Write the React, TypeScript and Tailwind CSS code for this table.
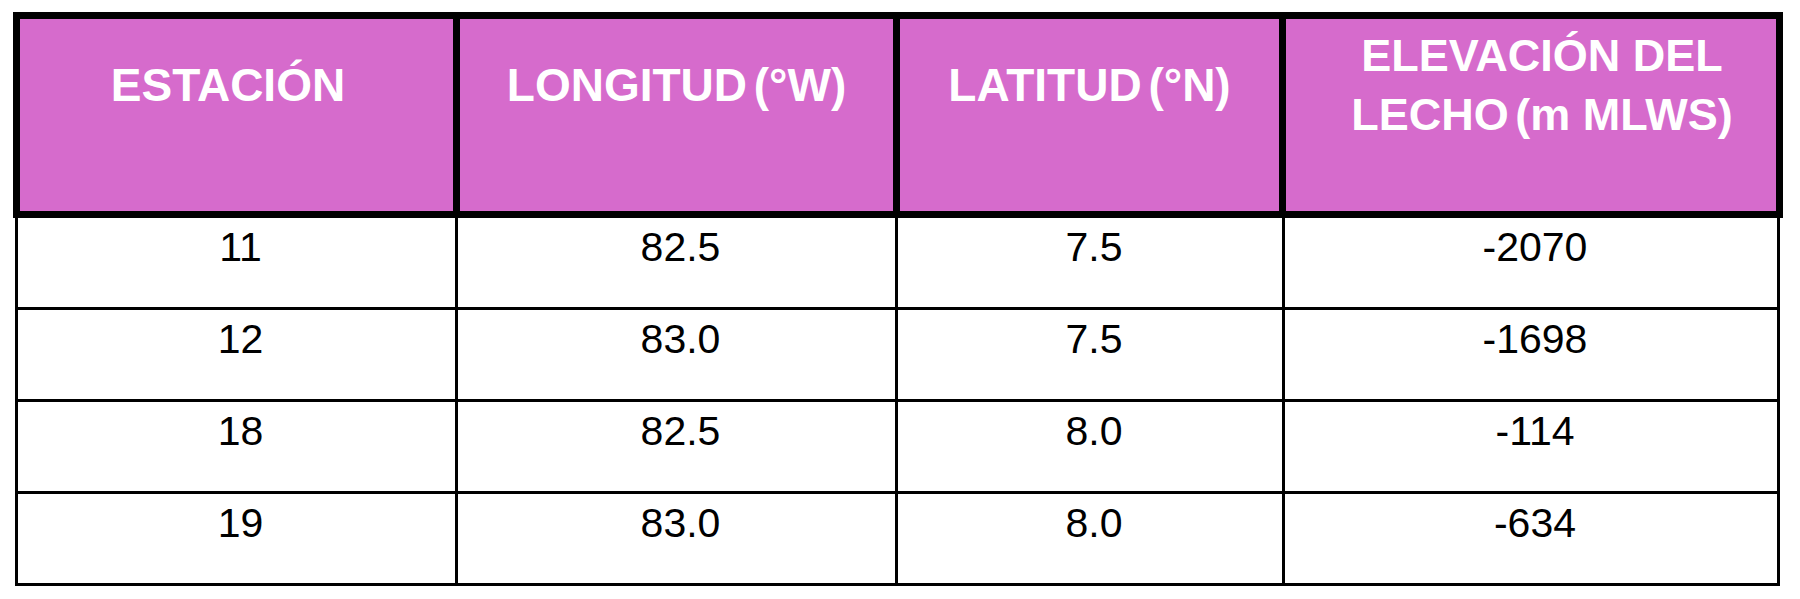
import React from "react";

const rows = [
  ["11", "82.5", "7.5", "-2070"],
  ["12", "83.0", "7.5", "-1698"],
  ["18", "82.5", "8.0", "-114"],
  ["19", "83.0", "8.0", "-634"],
];

const Sp = () => <span className="tracking-[-6px]"> </span>;

export default function App() {
  return (
    <div
      className="w-[1800px] h-[599px] bg-white overflow-hidden"
      style={{ fontFamily: '"Liberation Sans", Arial, sans-serif' }}
    >
      <div className="pt-[12px] pl-[13px]">
        {/* Header */}
        <div className="grid grid-cols-[433px_433px_379px_490px] gap-[7px] p-[7px] bg-black w-[1770px]">
          <div className="bg-[#d66bcc] h-[192px] flex items-center justify-center pb-[60px] pr-[17px] text-white font-bold text-[46px] leading-[59px] text-center">
            ESTACIÓN
          </div>
          <div className="bg-[#d66bcc] h-[192px] flex items-center justify-center pb-[60px] text-white font-bold text-[46px] leading-[59px] text-center">
            <span>
              LONGITUD<Sp />(°W)
            </span>
          </div>
          <div className="bg-[#d66bcc] h-[192px] flex items-center justify-center pb-[60px] text-white font-bold text-[46px] leading-[59px] text-center">
            <span>
              LATITUD<Sp />(°N)
            </span>
          </div>
          <div className="bg-[#d66bcc] h-[192px] flex items-center justify-center pb-[60px] pl-[22px] text-white font-bold text-[45px] leading-[59px] text-center">
            <span>
              ELEVACIÓN DEL
              <br />
              LECHO<Sp />(m MLWS)
            </span>
          </div>
        </div>
        {/* Body */}
        <div className="ml-[2px] w-[1765px] bg-black grid grid-cols-[437px_437px_384px_492px] gap-[3px] px-[3px] pb-[3px]">
          {rows.map((r, i) =>
            r.map((c, j) => (
              <div
                key={`${i}-${j}`}
                className="bg-white h-[89px] flex justify-center pt-[9px] pl-[8px] text-black text-[41px] leading-none"
              >
                {c}
              </div>
            ))
          )}
        </div>
      </div>
    </div>
  );
}
